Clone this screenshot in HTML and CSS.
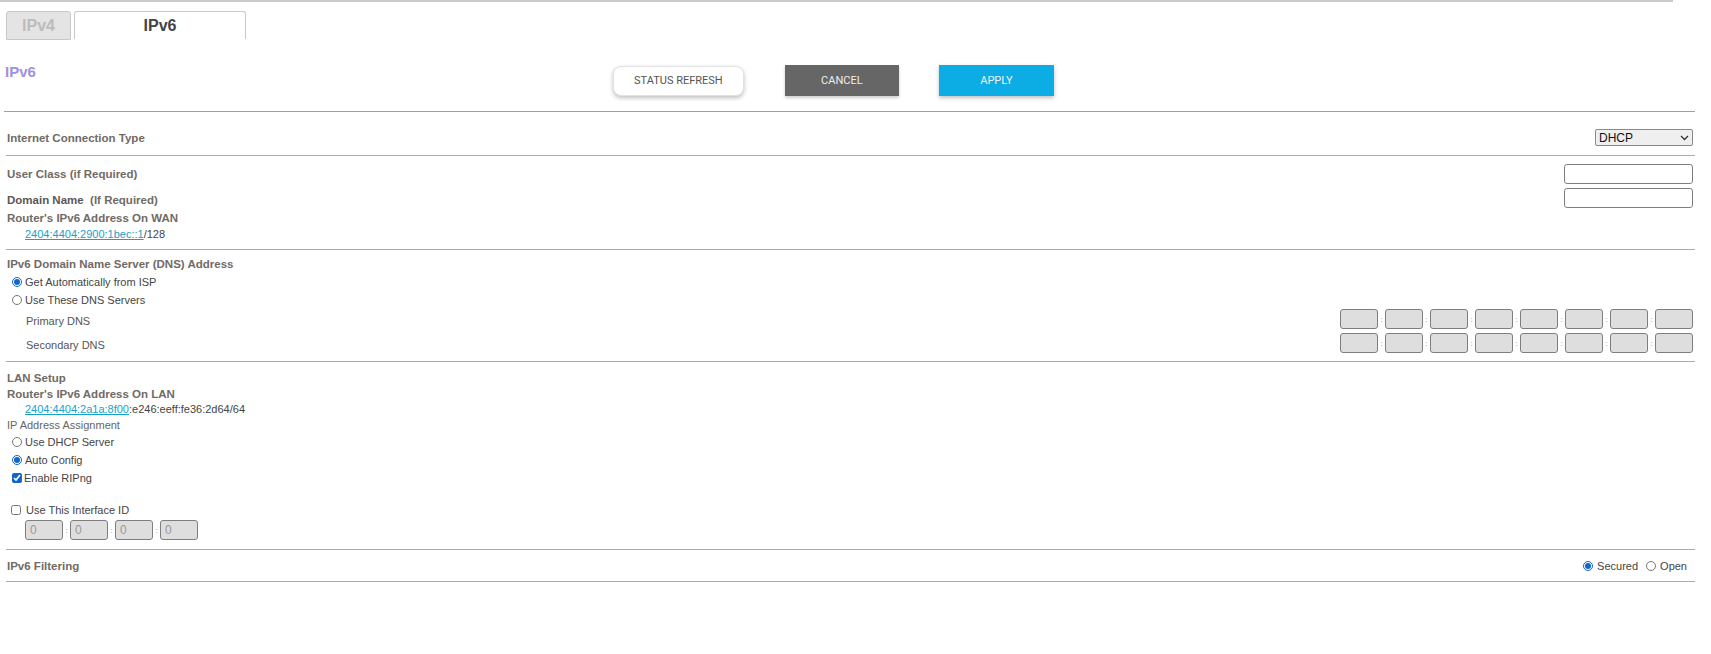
FILE: index.html
```html
<!DOCTYPE html>
<html lang="en">
<head>
    <meta charset="UTF-8">
    <title>IPv6 Setup</title>
    <link rel="stylesheet" href="styles.css">
</head>
<body>
    <div class="top-rule"></div>

    <div class="tabs">
        <div class="tab">IPv4</div>
        <div class="tab tab-active">IPv6</div>
    </div>

    <div class="page-head">
        <h1 class="page-title">IPv6</h1>
        <div class="head-buttons">
            <button class="btn btn-refresh">STATUS REFRESH</button>
            <button class="btn btn-cancel">CANCEL</button>
            <button class="btn btn-apply">APPLY</button>
        </div>
    </div>

    <div class="content">
        <div class="rule rule-head"></div>

        <div class="row row-conn">
            <span class="label-bold">Internet Connection Type</span>
            <div class="select-box">
                <span>DHCP</span>
                <svg width="9" height="6" viewBox="0 0 9 6"><path d="M1 1 L4.5 4.5 L8 1" fill="none" stroke="#333" stroke-width="1.3"/></svg>
            </div>
        </div>

        <div class="rule"></div>

        <div class="row row-field first">
            <span class="label-bold">User Class (if Required)</span>
            <input type="text" class="text-input">
        </div>
        <div class="row row-field">
            <span class="label-bold label-low"><span class="label-dark">Domain Name</span>&nbsp; (If Required)</span>
            <input type="text" class="text-input">
        </div>
        <div class="line label-bold gap-2">Router's IPv6 Address On WAN</div>
        <div class="line indent addr"><a href="#">2404:4404:2900:1bec::1</a>/128</div>

        <div class="rule gap-7"></div>

        <div class="line label-bold gap-6">IPv6 Domain Name Server (DNS) Address</div>
        <label class="opt first-opt"><input type="radio" name="dns" checked> Get Automatically from ISP</label>
        <label class="opt"><input type="radio" name="dns"> Use These DNS Servers</label>
        <div class="row row-dns">
            <span class="indent">Primary DNS</span>
            <div class="ip-boxes">
                <span class="ip-box"></span><i>:</i><span class="ip-box"></span><i>:</i><span class="ip-box"></span><i>:</i><span class="ip-box"></span><i>:</i><span class="ip-box"></span><i>:</i><span class="ip-box"></span><i>:</i><span class="ip-box"></span><i>:</i><span class="ip-box"></span>
            </div>
        </div>
        <div class="row row-dns second">
            <span class="indent">Secondary DNS</span>
            <div class="ip-boxes">
                <span class="ip-box"></span><i>:</i><span class="ip-box"></span><i>:</i><span class="ip-box"></span><i>:</i><span class="ip-box"></span><i>:</i><span class="ip-box"></span><i>:</i><span class="ip-box"></span><i>:</i><span class="ip-box"></span><i>:</i><span class="ip-box"></span>
            </div>
        </div>

        <div class="rule gap-8"></div>

        <div class="line label-bold gap-8">LAN Setup</div>
        <div class="line label-bold">Router's IPv6 Address On LAN</div>
        <div class="line indent addr short"><a href="#">2404:4404:2a1a:8f00</a>:e246:eeff:fe36:2d64/64</div>
        <div class="line plain">IP Address Assignment</div>
        <label class="opt"><input type="radio" name="lan"> Use DHCP Server</label>
        <label class="opt"><input type="radio" name="lan" checked> Auto Config</label>
        <label class="opt opt-check"><input type="checkbox" checked>Enable RIPng</label>

        <label class="opt opt-iface"><input type="checkbox"> Use This Interface ID</label>
        <div class="ip-boxes iface-boxes">
            <span class="ip-box">0</span><i>:</i><span class="ip-box">0</span><i>:</i><span class="ip-box">0</span><i>:</i><span class="ip-box">0</span>
        </div>

        <div class="rule gap-9"></div>

        <div class="row row-filter">
            <span class="label-bold">IPv6 Filtering</span>
            <div class="filter-opts">
                <label><input type="radio" name="filter" checked> Secured</label>
                <label><input type="radio" name="filter"> Open</label>
            </div>
        </div>

        <div class="rule"></div>
    </div>
</body>
</html>
```

FILE: styles.css
```css
body {
    margin: 0;
    font-family: "Liberation Sans", Arial, sans-serif;
    font-size: 11px;
    color: #444;
    background-color: white;
}

.top-rule {
    width: 1673px;
    height: 2px;
    background-color: #cbcbcb;
}

.tabs {
    display: flex;
    gap: 3px;
    margin-top: 9px;
    padding-left: 6px;
}

.tab {
    width: 63px;
    height: 27px;
    line-height: 27px;
    text-align: center;
    border: 1px solid #c8c8c8;
    border-radius: 3px 3px 0 0;
    background-color: #e4e4e4;
    color: #bcbcbc;
    font-size: 16px;
    font-weight: bold;
}

.tab-active {
    width: 170px;
    height: 27px;
    border-bottom: none;
    background-color: white;
    color: #444;
}

.page-head {
    display: flex;
    align-items: flex-start;
    height: 71px;
}

.page-title {
    margin: 23px 0 0 5px;
    font-size: 15px;
    line-height: 18px;
    color: #9d92df;
}

.head-buttons {
    display: flex;
    align-items: center;
    margin: 25px 0 0 577px;
}

.btn {
    height: 31px;
    font-family: Roboto, "Liberation Sans", sans-serif;
    font-size: 11px;
    border: none;
    cursor: pointer;
}

.btn-refresh {
    width: 131px;
    height: 30px;
    background-color: white;
    color: #555;
    border: 1px solid #e2e2e2;
    border-radius: 8px;
    box-shadow: 0 2px 4px rgba(0, 0, 0, 0.25);
}

.btn-cancel {
    width: 114px;
    margin-left: 41px;
    background-color: #666;
    color: #eee;
    box-shadow: 0 2px 3px rgba(0, 0, 0, 0.2);
}

.btn-apply {
    width: 115px;
    margin-left: 40px;
    background-color: #0cade5;
    color: #f2f2f2;
    box-shadow: 0 2px 4px rgba(0, 0, 0, 0.25);
}

.content {
    width: 1690px;
    margin-left: 5px;
}

.rule {
    height: 1px;
    background-color: #aaa7c3;
    margin-left: 1px;
}

.rule-head {
    margin-left: -1px;
    background-color: #9f9cba;
}

.gap-2 { margin-top: 2px; }
.gap-6 { margin-top: 6px; }
.gap-7 { margin-top: 7px; }
.gap-8 { margin-top: 8px; }
.gap-9 { margin-top: 9px; }

.row {
    display: flex;
    justify-content: space-between;
    align-items: center;
    padding-left: 2px;
    padding-right: 2px;
}

.label-bold {
    font-weight: bold;
    font-size: 11.5px;
    color: #716a66;
}

.label-dark {
    color: #5d5652;
}

.label-low {
    padding-top: 4px;
}

.row-conn {
    height: 17px;
    padding-top: 17px;
    padding-bottom: 9px;
}

.select-box {
    display: flex;
    justify-content: space-between;
    align-items: center;
    width: 90px;
    height: 15px;
    padding: 0 3px;
    border: 1px solid #8a8a8a;
    border-radius: 2px;
    background-color: #efefef;
    color: #111;
    font-size: 12px;
}

.row-field {
    height: 20px;
    margin-top: 4px;
}

.row-field.first {
    margin-top: 8px;
}

.text-input {
    box-sizing: border-box;
    width: 129px;
    height: 20px;
    margin: 0;
    border: 1px solid #7d7d7d;
    border-radius: 3px;
    background-color: white;
}

.line {
    height: 16px;
    line-height: 16px;
    padding-left: 2px;
}

.line.short {
    height: 15px;
    line-height: 15px;
}

.plain {
    color: #666;
}

.indent {
    padding-left: 20px;
}

.addr {
    color: #444;
}

.addr a {
    color: #16a2c8;
}

.opt {
    display: flex;
    align-items: center;
    height: 18px;
    padding-left: 7px;
    color: #444;
}

.opt input {
    width: 10px;
    height: 10px;
    margin: 0 3px 0 0;
    accent-color: #1266c9;
}

.first-opt {
    margin-top: 1px;
}

.opt-check {
    height: 17px;
}

.opt-check input {
    margin-right: 2px;
}

.opt-iface {
    margin-top: 15px;
    padding-left: 6px;
}

.opt-iface input {
    margin-right: 5px;
}

.row-dns {
    height: 20px;
    color: #555;
}

.row-dns .indent {
    padding-left: 19px;
    padding-top: 3px;
}

.row-dns.second {
    margin-top: 4px;
}

.ip-boxes {
    display: flex;
    align-items: center;
}

.ip-boxes i {
    width: 7px;
    text-align: center;
    font-style: normal;
    font-size: 8px;
    color: #888;
}

.ip-box {
    box-sizing: border-box;
    width: 38px;
    height: 20px;
    padding-left: 4px;
    line-height: 18px;
    border: 1px solid #7e7e7e;
    border-radius: 3px;
    background-color: #dedede;
    color: #999;
    font-size: 12px;
}

.iface-boxes {
    margin-top: 1px;
    padding-left: 20px;
}

.row-filter {
    height: 31px;
    padding-right: 8px;
}

.filter-opts {
    display: flex;
    gap: 8px;
    color: #444;
}

.filter-opts label {
    display: flex;
    align-items: center;
}

.filter-opts input {
    width: 10px;
    height: 10px;
    margin: 0 4px 0 0;
    accent-color: #1266c9;
}
```
